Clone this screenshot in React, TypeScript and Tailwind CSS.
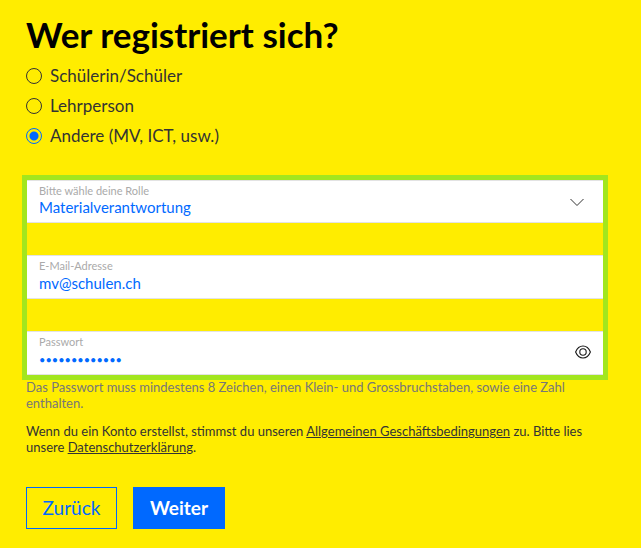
import React, { useState } from "react";

const roles = ["Schülerin/Schüler", "Lehrperson", "Andere (MV, ICT, usw.)"];

const fieldClass = "relative bg-white border-y border-[#e3e3e3]";
const labelClass =
	"absolute left-3 top-1 text-[11px] leading-3 text-[#aaaaaa] pointer-events-none";
const inputClass =
	"block w-full h-full pl-3 pr-12 pt-3 text-[#0069ff] bg-transparent outline-none appearance-none";

const EyeIcon = () => (
	<svg
		className="block w-4 h-4"
		viewBox="0 0 16 16"
		fill="none"
		stroke="#1a1a1a"
		strokeWidth="1.1"
	>
		<path d="M0.6 8C2.2 4 4.8 2 8 2S13.8 4 15.4 8C13.8 12 11.2 14 8 14S2.2 12 0.6 8Z" />
		<circle cx="8" cy="8" r="3.2" />
	</svg>
);

const App = () => {
	const [role, setRole] = useState(roles[2]);
	const [email, setEmail] = useState("mv@schulen.ch");
	const [password, setPassword] = useState("passwort12345");
	const [visible, setVisible] = useState(false);

	return (
		<main className="min-h-screen bg-[#ffed00] pt-3.5 pb-4 pl-[26px] pr-[37px] font-['Lato',sans-serif] text-[#333333]">
			<h1 className="text-[35px] leading-10 font-bold text-black">
				Wer registriert sich?
			</h1>

			<div className="mt-2.5 flex flex-col gap-1.5" role="radiogroup">
				{roles.map((item) => (
					<label key={item} className="flex items-center gap-2 h-6 text-[17px]">
						<input
							type="radio"
							name="role"
							checked={role === item}
							onChange={() => setRole(item)}
							className="appearance-none w-4 h-4 rounded-full border border-[#333333] checked:border-[#0069ff] checked:bg-[radial-gradient(circle,#0069ff_4px,transparent_5px)]"
						/>
						{item}
					</label>
				))}
			</div>

			<div className="mt-8 mx-px outline-5 outline-[#a2e61e] flex flex-col gap-8">
				<div className={`${fieldClass} h-[43px]`}>
					<label htmlFor="function" className={labelClass}>
						Bitte wähle deine Rolle
					</label>
					<select id="function" className={`${inputClass} text-[15px]`}>
						<option>Materialverantwortung</option>
						<option>Schulleitung</option>
					</select>
					<svg
						className="absolute right-4.5 top-3.5 w-4 h-4 pointer-events-none"
						viewBox="0 0 16 16"
						fill="none"
						stroke="#333333"
					>
						<path d="M1.5 4L8 10.5L14.5 4" />
					</svg>
				</div>
				<div className={`${fieldClass} h-11`}>
					<label htmlFor="email" className={labelClass}>
						E-Mail-Adresse
					</label>
					<input
						id="email"
						type="email"
						value={email}
						onChange={(e) => setEmail(e.target.value)}
						className={`${inputClass} text-[15px]`}
					/>
				</div>
				<div className={`${fieldClass} h-11`}>
					<label htmlFor="password" className={labelClass}>
						Passwort
					</label>
					<input
						id="password"
						type={visible ? "text" : "password"}
						value={password}
						onChange={(e) => setPassword(e.target.value)}
						className={`${inputClass} ${visible ? "text-[15px]" : "text-[11px]"}`}
					/>
					<button
						type="button"
						aria-label="Passwort anzeigen"
						onClick={() => setVisible(!visible)}
						className="absolute right-3 top-3"
					>
						<EyeIcon />
					</button>
				</div>
			</div>

			<p className="mt-1 text-[13px] leading-4 text-[#777777]">
				Das Passwort muss mindestens 8 Zeichen, einen Klein- und
				Grossbruchstaben, sowie eine Zahl enthalten.
			</p>
			<p className="mt-3 text-[13px] leading-4">
				Wenn du ein Konto erstellst, stimmst du unseren{" "}
				<a href="#agb" className="underline">
					Allgemeinen Geschäftsbedingungen
				</a>{" "}
				zu. Bitte lies unsere{" "}
				<a href="#datenschutz" className="underline">
					Datenschutzerklärung
				</a>
				.
			</p>

			<div className="mt-8 flex gap-4 text-[19px]">
				<button
					type="button"
					className="h-[42px] w-[91px] border border-[#0069ff] text-[#0069ff]"
				>
					Zurück
				</button>
				<button
					type="submit"
					className="h-[42px] w-23 bg-[#0069ff] text-white font-bold"
				>
					Weiter
				</button>
			</div>
		</main>
	);
};

export default App;
